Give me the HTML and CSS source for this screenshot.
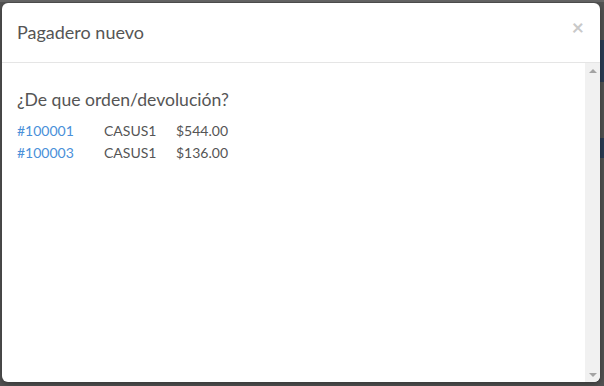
FILE: index.html
```html
<!DOCTYPE html>
<html lang="es">
<head>
<meta charset="utf-8">
<title>Pagadero nuevo</title>
<link rel="stylesheet" href="styles.css">
</head>
<body>
<div class="backdrop">
  <div class="bg-line bg-top"></div>
  <div class="bg-band band1"></div>
  <div class="bg-band band2"></div>
  <div class="modal">
    <div class="modal-header">
      <h4 class="modal-title">Pagadero nuevo</h4>
      <span class="close">×</span>
    </div>
    <div class="modal-main">
      <div class="modal-body">
        <h3 class="question">¿De que orden/devolución?</h3>
        <div class="orders">
          <a class="order-link" href="#">#100001</a><span>CASUS1</span><span>$544.00</span>
          <a class="order-link" href="#">#100003</a><span>CASUS1</span><span>$136.00</span>
        </div>
      </div>
      <div class="scrollbar">
        <span class="arrow arrow-up"></span>
        <span class="arrow arrow-down"></span>
      </div>
    </div>
  </div>
</div>
</body>
</html>
```
FILE: styles.css
```css
html, body {
  margin: 0;
  padding: 0;
  width: 604px;
  height: 386px;
  overflow: hidden;
  font-family: Lato, "Open Sans", sans-serif;
}
.backdrop {
  position: relative;
  width: 604px;
  height: 386px;
  box-sizing: border-box;
  padding: 3px 4px 4px 2px;
  background: #525252;
}
.bg-line {
  position: absolute;
  left: 0;
  right: 0;
  top: 0;
  height: 2px;
  background: #666;
}
.bg-band {
  position: absolute;
  right: 0;
  width: 4px;
  background: #2b3b54;
}
.band1 { top: 40px; height: 42px; }
.band2 { top: 138px; height: 20px; }
.modal {
  position: relative;
  width: 598px;
  height: 379px;
  background: #fff;
  border-radius: 6px;
  overflow: hidden;
  display: flex;
  flex-direction: column;
  box-shadow: 0 2px 6px rgba(0,0,0,0.35);
}
.modal-header {
  height: 59px;
  flex: none;
  border-bottom: 1px solid #e5e5e5;
  display: flex;
  align-items: center;
  justify-content: space-between;
  padding: 0 16px 2px 15px;
  box-sizing: border-box;
  height: 60px;
}
.modal-title {
  margin: 0;
  font-size: 18px;
  font-weight: 400;
  color: #555;
  line-height: 26px;
}
.close {
  font-size: 21px;
  font-weight: 700;
  color: #c9c9c9;
  line-height: 1;
  margin-top: -10px;
}
.modal-main {
  flex: 1;
  display: flex;
  min-height: 0;
}
.modal-body {
  flex: 1;
  padding: 24px 15px 0;
}
.scrollbar {
  width: 15px;
  flex: none;
  background: #f1f1f1;
  display: flex;
  flex-direction: column;
  justify-content: space-between;
  align-items: center;
  padding: 6px 0 5px;
}
.arrow {
  width: 0;
  height: 0;
  border-left: 4px solid transparent;
  border-right: 4px solid transparent;
}
.arrow-up {
  border-bottom: 4px solid #a3a3a3;
}
.arrow-down {
  border-top: 4px solid #a3a3a3;
}
.question {
  margin: 0 0 7px;
  font-size: 17.6px;
  font-weight: 400;
  line-height: 26px;
  color: #555;
}
.orders {
  display: grid;
  grid-template-columns: 87px 72px auto;
  justify-content: start;
  font-size: 14px;
  line-height: 22px;
  color: #555;
}
.order-link {
  color: #4a90d9;
  text-decoration: none;
}
```
